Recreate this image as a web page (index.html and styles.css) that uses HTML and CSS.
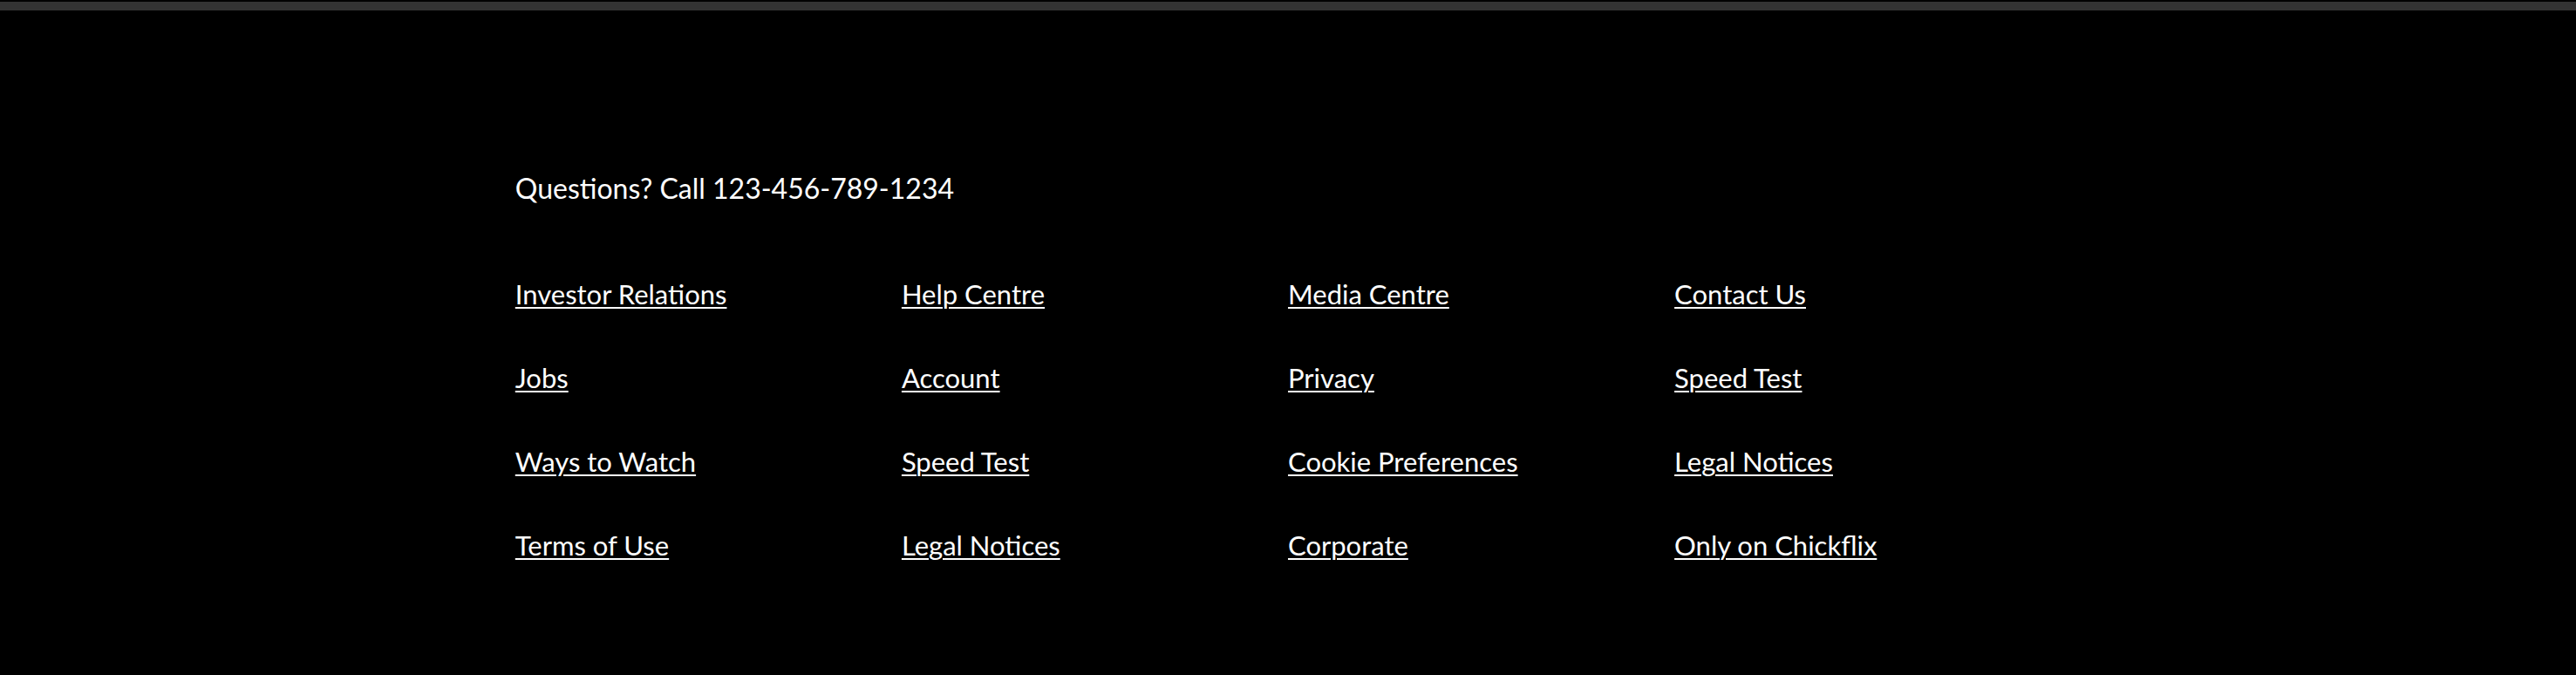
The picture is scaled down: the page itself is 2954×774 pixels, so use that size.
FILE: index.html
```html
<!DOCTYPE html>
<html lang="en">
<head>
<meta charset="utf-8">
<title>Footer</title>
<link rel="stylesheet" href="styles.css">
</head>
<body>
<div class="topbar"></div>
<footer class="footer">
  <p class="footer-phone">Questions? Call 123-456-789-1234</p>
  <ul class="footer-links">
    <li><a href="#">Investor Relations</a></li>
    <li><a href="#">Help Centre</a></li>
    <li><a href="#">Media Centre</a></li>
    <li><a href="#">Contact Us</a></li>
    <li><a href="#">Jobs</a></li>
    <li><a href="#">Account</a></li>
    <li><a href="#">Privacy</a></li>
    <li><a href="#">Speed Test</a></li>
    <li><a href="#">Ways to Watch</a></li>
    <li><a href="#">Speed Test</a></li>
    <li><a href="#">Cookie Preferences</a></li>
    <li><a href="#">Legal Notices</a></li>
    <li><a href="#">Terms of Use</a></li>
    <li><a href="#">Legal Notices</a></li>
    <li><a href="#">Corporate</a></li>
    <li><a href="#">Only on Chickflix</a></li>
  </ul>
</footer>
</body>
</html>
```

FILE: styles.css
```css
html, body {
  margin: 0;
  padding: 0;
  background: #000;
  color: #fff;
  font-family: Lato, "Open Sans", "Liberation Sans", sans-serif;
}

.topbar {
  margin-top: 2px;
  height: 10px;
  background: #333;
}

.footer {
  width: 60%;
  margin: 0 auto;
  padding-top: 185px;
  padding-bottom: 60px;
}

.footer-phone {
  margin: 0;
  font-size: 32px;
  line-height: 38px;
}

.footer-links {
  list-style: none;
  margin: 84px 0 0;
  padding: 0;
  display: grid;
  grid-template-columns: repeat(4, 1fr);
  row-gap: 60px;
}

.footer-links li {
  font-size: 31px;
  line-height: 36px;
}

.footer-links a {
  color: #fff;
  text-decoration: underline;
  text-decoration-thickness: 2px;
  text-underline-offset: 3px;
}
```
